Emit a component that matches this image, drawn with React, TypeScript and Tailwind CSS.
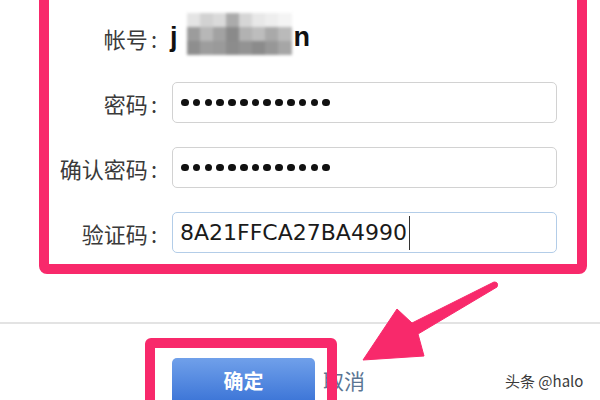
import React from 'react';

const PINK = 'border-[#f8296b]';

// blurred username mosaic, rows of gray blocks
const MOSAIC = [
  ['bg-[#e4e4e4]', 'bg-[#d2d2d2]', 'bg-[#dadada]', 'bg-[#ababab]', 'bg-[#d6d6d6]', 'bg-[#e8e8e8]', 'bg-[#eeeeee]', 'bg-[#f4f4f4]'],
  ['bg-[#9c9c9c]', 'bg-[#b7b7b7]', 'bg-[#a2a2a2]', 'bg-[#8a8a8a]', 'bg-[#b2b2b2]', 'bg-[#bdbdbd]', 'bg-[#a9a9a9]', 'bg-[#bababa]'],
  ['bg-[#8e8e8e]', 'bg-[#9d9d9d]', 'bg-[#9a9a9a]', 'bg-[#8c8c8c]', 'bg-[#939393]', 'bg-[#8b8b8b]', 'bg-[#979797]', 'bg-[#a6a6a6]'],
];

function Label({ text }: { text: string }) {
  return (
    <div className="w-[108px] shrink-0 text-right text-[22px] leading-none text-[#3a3a3a]">
      {text}
      <span className="ml-[3px]">:</span>
    </div>
  );
}

function Dots() {
  return (
    <div className="flex items-center gap-[4.2px] pl-[8px]">
      {Array.from({ length: 13 }).map((_, i) => (
        <span key={i} className="w-[7.6px] h-[7.6px] rounded-full bg-[#111]" />
      ))}
    </div>
  );
}

export default function App() {
  return (
    <div className="relative w-[600px] h-[400px] overflow-hidden bg-white font-['Noto_Sans_CJK_SC',sans-serif]">
      {/* annotated form frame */}
      <div className={`-mt-[12px] ml-[39px] w-[548px] h-[286px] border-[10px] ${PINK} rounded-[8px] pt-[19px] pr-[20px] flex flex-col gap-[24px]`}>
        <div className="flex items-center h-[41px]">
          <Label text="帐号" />
          <div className="ml-[13px] flex items-center font-['Liberation_Sans',sans-serif] font-bold text-[27px] text-[#111]">
            <span>j</span>
            <div className="ml-[9px] mr-[2px] mb-[7px] grid grid-cols-8 w-[105px] h-[42px] blur-[1.5px]">
              {MOSAIC.flat().map((c, i) => (
                <span key={i} className={c} />
              ))}
            </div>
            <span>n</span>
          </div>
        </div>

        <div className="flex items-center h-[41px]">
          <Label text="密码" />
          <div className="ml-[15px] flex-1 h-[41px] border-[1.5px] border-[#d2d2d2] rounded-[5px] flex items-center">
            <Dots />
          </div>
        </div>

        <div className="flex items-center h-[41px]">
          <Label text="确认密码" />
          <div className="ml-[15px] flex-1 h-[41px] border-[1.5px] border-[#d2d2d2] rounded-[5px] flex items-center">
            <Dots />
          </div>
        </div>

        <div className="flex items-center h-[41px]">
          <Label text="验证码" />
          <div className="ml-[15px] flex-1 h-[41px] border-[1.5px] border-[#b3cde8] rounded-[5px] flex items-center pl-[7px]">
            <span className="font-['DejaVu_Sans',sans-serif] text-[22px] leading-none text-[#1a1a1a]">8A21FFCA27BA4990</span>
            <span className="ml-[2px] w-[1.5px] h-[34px] bg-[#333]" />
          </div>
        </div>
      </div>

      {/* divider */}
      <div className="mt-[48px] h-[1.5px] bg-[#e3e3e3]" />

      {/* buttons */}
      <div className="pl-[172px] pt-[34px] flex items-center gap-[8px]">
        <button className="w-[143px] h-[46px] rounded-[5px] bg-gradient-to-b from-[#70a0ea] to-[#3a73d6] text-white text-[20px] font-bold">
          确定
        </button>
        <span className="text-[21px] text-[#5a7593]">取消</span>
      </div>

      {/* highlight box over confirm button */}
      <div className={`absolute left-[145px] top-[338px] w-[192px] h-[90px] border-[10px] ${PINK} rounded-[6px]`} />

      {/* arrow */}
      <svg className="absolute left-0 top-0" width="600" height="400" viewBox="0 0 600 400">
        <path
          d="M494 282 Q499 282 497 287 L418 334 L424 356 L363 360 L397 309 L412 323 Z"
          fill="#f8296b"
          stroke="#f8296b"
          strokeWidth="1"
          strokeLinejoin="round"
        />
      </svg>

      {/* watermark */}
      <div className="absolute left-[505px] top-[370px] text-[15px] text-[#3a3a3a] [text-shadow:0_0_2px_#fff]">
        头条 @halo
      </div>
    </div>
  );
}
